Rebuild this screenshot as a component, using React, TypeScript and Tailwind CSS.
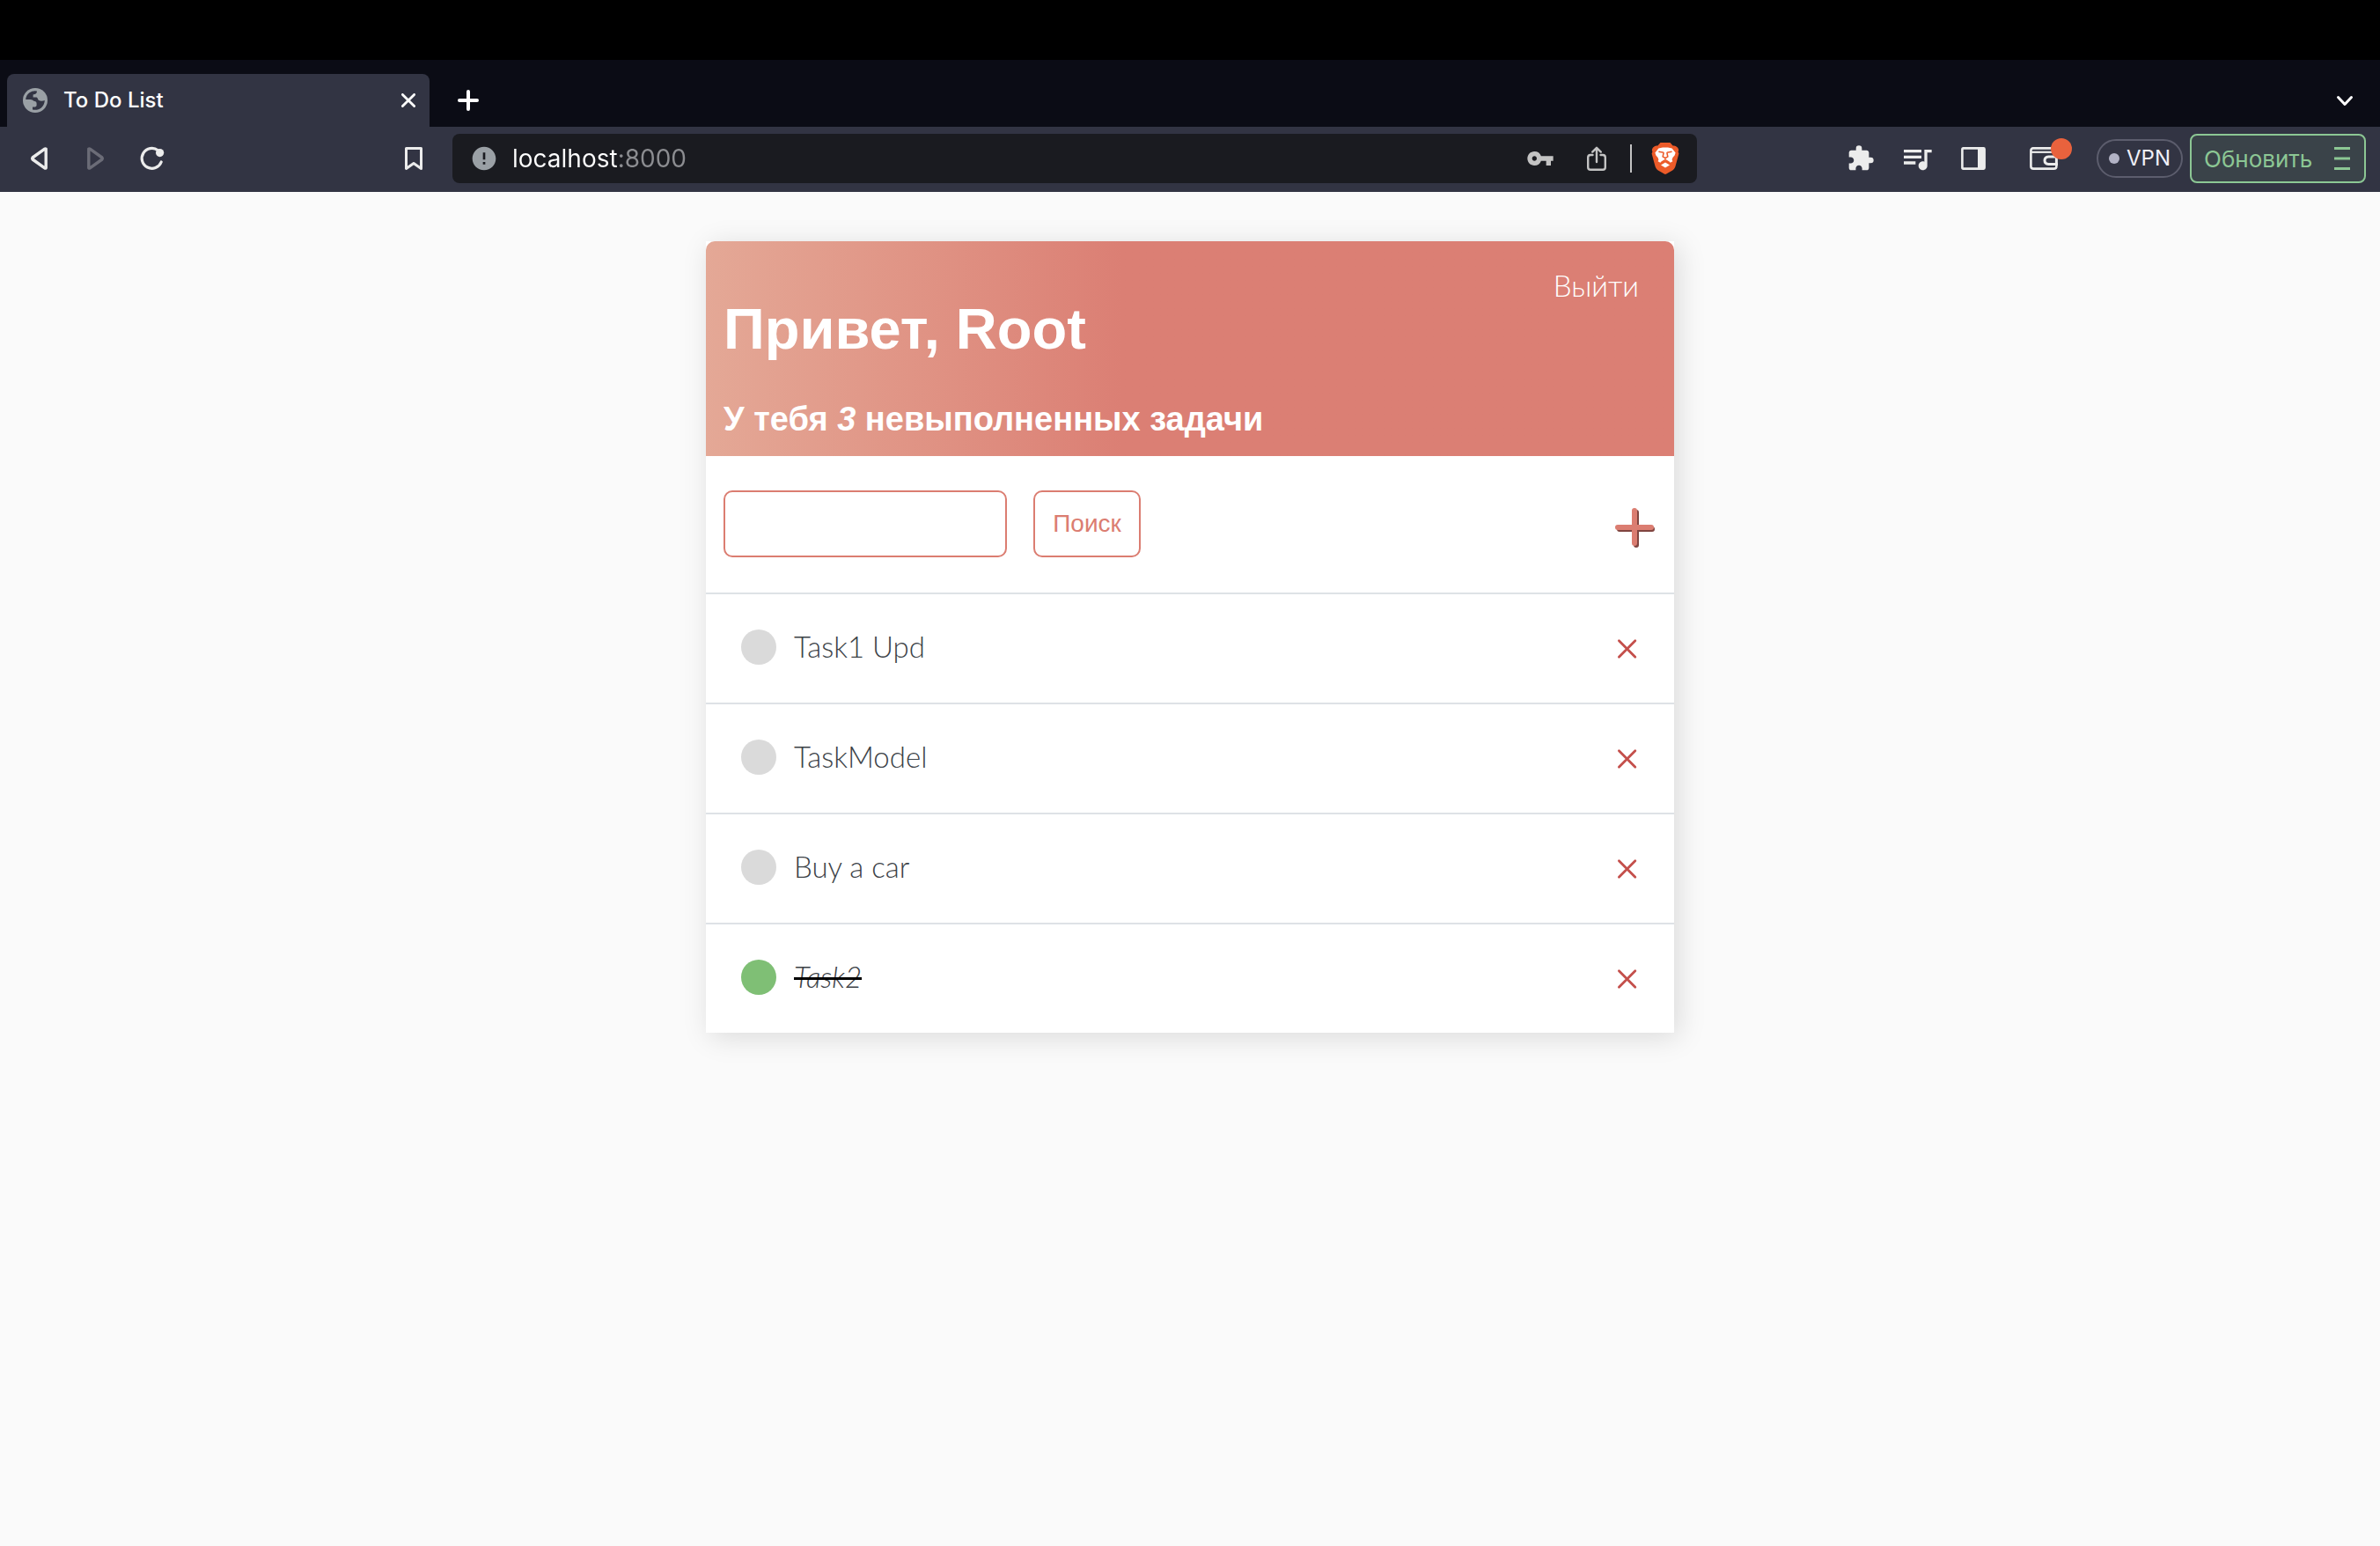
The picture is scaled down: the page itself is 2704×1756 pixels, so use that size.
import { useState } from "react";
import { MdError, MdExtension, MdQueueMusic, MdVpnKey } from "react-icons/md";

type Task = { id: number; title: string; complete: boolean };

const initialTasks: Task[] = [
  { id: 1, title: "Task1 Upd", complete: false },
  { id: 2, title: "TaskModel", complete: false },
  { id: 3, title: "Buy a car", complete: false },
  { id: 4, title: "Task2", complete: true },
];

function GlobeIcon() {
  return (
    <svg className="size-7 shrink-0" viewBox="0 0 28 28" aria-hidden="true">
      <circle cx="14" cy="14" r="14" fill="#9aa0a5" />
      <path
        d="M3.2 13A10.8 10.8 0 0 1 16 3.4L15.6 5.6Q15 7.3 11.6 7.6V10.4H15.4Q16.6 10.6 16.8 12Q17.2 14.2 19.5 14.6Q22.5 15 24.8 14A10.8 10.8 0 0 1 11 24.4V21.4H14Q15.6 21.2 15.6 19.5V17.5Q15.4 15 12.4 14.8Q11 13.2 8.5 13Z"
        fill="#323443"
      />
    </svg>
  );
}

function BraveIcon() {
  return (
    <svg className="h-9 w-8" viewBox="0 0 32 36" aria-hidden="true">
      <path
        d="M10.5 0H21.5L24.6 3.6C26.6 3 28.6 3.8 30.3 6L31.2 8.2L30.6 10.4L31.4 12.6L27.6 26.6C27 28.8 26 30.2 24.2 31.5L17.2 35.6Q16 36.3 14.8 35.6L7.8 31.5C6 30.2 5 28.8 4.4 26.6L.6 12.6L1.4 10.4L.8 8.2L1.7 6C3.4 3.8 5.4 3 7.4 3.6Z"
        fill="#ec5b29"
      />
      <path
        d="M8.4 6.6L13 5.6H19L23.6 6.6L27.6 11.6L26.6 14.4L24.4 17L23.6 19.4L24.4 21.2L21.2 23L19 21.6L16.8 20.2H15.2L13 21.6L10.8 23L7.6 21.2L8.4 19.4L7.6 17L5.4 14.4L4.4 11.6Z"
        fill="#fff"
      />
      <path d="M16 22.4L21 25.4L16 28.6L11 25.4Z" fill="#fff" />
      <path
        d="M8.4 10.2L14.2 11.2M23.6 10.2L17.8 11.2M14.2 11.2L13.2 15.8L16 17.6L18.8 15.8L17.8 11.2M16 17.6V19.6M10.8 22.8L16 19.4L21.2 22.8"
        fill="none"
        stroke="#ec5b29"
        strokeWidth="1.6"
      />
    </svg>
  );
}

function BrowserChrome() {
  return (
    <header className="font-[Inter,sans-serif]">
      <div className="h-[68px] bg-black" />
      <div className="flex h-[76px] items-end bg-[#0b0c15] pl-2">
        <div className="flex h-[60px] w-[480px] items-center rounded-t-lg bg-[#323443] pr-4 pl-[18px]">
          <GlobeIcon />
          <span className="ml-[18px] flex-1 text-2xl font-medium text-white">To Do List</span>
          <button type="button" aria-label="Close tab" className="size-4">
            <svg viewBox="0 0 16 16" fill="none" stroke="#fff" strokeWidth="2.8" strokeLinecap="round">
              <path d="M1.4 1.4L14.6 14.6M14.6 1.4L1.4 14.6" />
            </svg>
          </button>
        </div>
        <button type="button" aria-label="New tab" className="ml-8 flex h-[60px] items-center">
          <svg className="size-6" viewBox="0 0 24 24" fill="none" stroke="#fff" strokeWidth="4" strokeLinecap="round">
            <path d="M12 2V22M2 12H22" />
          </svg>
        </button>
        <button type="button" aria-label="Search tabs" className="mr-6 ml-auto flex h-[60px] items-center">
          <svg className="size-8" viewBox="0 0 32 32" fill="none" stroke="#fff" strokeWidth="3" strokeLinecap="round" strokeLinejoin="round">
            <path d="M8.5 12.5L16 20.5L23.5 12.5" />
          </svg>
        </button>
      </div>

      <div className="flex h-[74px] items-center bg-[#323443] pr-4 pb-0.5 pl-7">
        <button type="button" aria-label="Back" className="flex size-8 shrink-0 items-center justify-center">
          <svg className="size-8" viewBox="0 0 32 32" fill="none" stroke="#ececec" strokeWidth="3.4" strokeLinejoin="round">
            <path d="M24.2 5.2V26.8Q23.5 27.3 22.8 26.8L9 17Q8.2 16 9 15L22.8 5.2Q23.5 4.7 24.2 5.2Z" />
          </svg>
        </button>
        <button type="button" aria-label="Forward" className="ml-8 flex size-8 shrink-0 items-center justify-center">
          <svg className="size-8" viewBox="0 0 32 32" fill="none" stroke="#6b6c77" strokeWidth="3.4" strokeLinejoin="round">
            <path d="M8.8 5.2V26.8Q9.5 27.3 10.2 26.8L24 17Q24.8 16 24 15L10.2 5.2Q9.5 4.7 8.8 5.2Z" />
          </svg>
        </button>
        <button type="button" aria-label="Reload" className="ml-8 flex size-8 shrink-0 items-center justify-center">
          <svg className="size-8" viewBox="0 0 32 32" fill="none" stroke="#ececec" strokeWidth="3.2" strokeLinecap="round">
            <path d="M23.5 6.8A11.4 11.4 0 1 0 27.2 20" />
            <circle cx="25.6" cy="9.6" r="4.6" fill="#ececec" stroke="none" />
          </svg>
        </button>
        <button type="button" aria-label="Bookmark" className="ml-[266px] flex size-8 shrink-0 items-center justify-center">
          <svg className="size-8" viewBox="0 0 32 32" fill="none" stroke="#ececec" strokeWidth="3" strokeLinejoin="round">
            <path d="M7.5 4.5H24.5V27.5L16 21.5L7.5 27.5Z" />
          </svg>
        </button>

        <div className="mr-[170px] ml-7 flex h-14 min-w-0 flex-1 items-center rounded-lg bg-[#1a1b20] pr-5 pl-5">
          <MdError className="size-8 shrink-0 text-[#9aa0a5]" />
          <input
            type="text"
            aria-label="Address"
            defaultValue="localhost:8000"
            className="ml-4 min-w-0 flex-1 bg-linear-to-r from-white from-[121px] to-[#8c8d91] to-[121px] bg-clip-text text-[28px] text-transparent outline-none"
          />
          <button type="button" aria-label="Passwords">
            <MdVpnKey className="size-8 text-[#c3c3c3]" />
          </button>
          <button type="button" aria-label="Share" className="ml-8">
            <svg className="size-8" viewBox="0 0 32 32" fill="none" stroke="#c3c3c3" strokeWidth="2.4" strokeLinecap="round" strokeLinejoin="round">
              <path d="M11.5 12H9Q6.2 12 6.2 14.8V26Q6.2 28.8 9 28.8H23Q25.8 28.8 25.8 26V14.8Q25.8 12 23 12H20.5M16 20V4M11.2 8.6L16 3.8L20.8 8.6" />
            </svg>
          </button>
          <div className="mr-[22px] ml-[22px] h-8 w-0.5 bg-[#c3c3c3]" />
          <button type="button" aria-label="Brave Shields">
            <BraveIcon />
          </button>
        </div>

        <button type="button" aria-label="Extensions">
          <MdExtension className="size-8 text-[#ececec]" />
        </button>
        <button type="button" aria-label="Media" className="ml-7">
          <MdQueueMusic className="size-10 text-[#ececec]" />
        </button>
        <button type="button" aria-label="Side panel" className="ml-[30px]">
          <svg className="h-[26px] w-7" viewBox="0 0 28 26" aria-hidden="true">
            <rect x="1.4" y="1.4" width="25.2" height="23.2" rx="1" fill="none" stroke="#ececec" strokeWidth="2.6" />
            <path d="M19 1H27V25H19Z" fill="#ececec" />
          </svg>
        </button>
        <button type="button" aria-label="Wallet" className="relative ml-[50px]">
          <svg className="h-[26px] w-8" viewBox="0 0 32 26" fill="none" stroke="#ececec" strokeWidth="2.6">
            <path d="M30 9V4Q30 1.4 27 1.4H4Q1.4 1.4 1.4 4V22Q1.4 24.6 4.4 24.6H27.4Q30.4 24.6 30.4 22V20" />
            <path d="M1.4 5.8H30" strokeWidth="2.2" />
            <path d="M32 11H21.5Q17 11.4 17 15.2Q17 19 21.5 19.4H32M30.4 19V11" strokeWidth="3" />
          </svg>
          <span className="absolute -top-[10px] -right-4 size-6 rounded-full bg-[#e9623d]" />
        </button>
        <button
          type="button"
          className="ml-11 flex h-11 items-center gap-2 rounded-full border-2 border-[#5c5d6d] px-3 text-2xl text-[#f0f0f8]"
        >
          <span className="size-3 rounded-full bg-[#b2b3c5]" />
          VPN
        </button>
        <button
          type="button"
          className="ml-2 flex h-14 w-[200px] shrink-0 items-center justify-between rounded-lg border-2 border-[#8cc794] bg-[#3a4349] pr-4 pl-3.5 text-[26px] text-[#8cc794]"
        >
          Обновить
          <svg className="h-[26px] w-[18px]" viewBox="0 0 18 26" fill="none" stroke="#8cc794" strokeWidth="3">
            <path d="M0 1.5H18M0 13H18M0 24.5H18" />
          </svg>
        </button>
      </div>
    </header>
  );
}

function TaskRow({ task, onToggle, onDelete }: { task: Task; onToggle: () => void; onDelete: () => void }) {
  return (
    <li className="flex h-[125px] items-center border-t-2 border-[#dee2e6] px-10 pb-1">
      <input
        type="checkbox"
        aria-label={task.title}
        checked={task.complete}
        onChange={onToggle}
        className="size-10 appearance-none rounded-full bg-[#dadada] checked:bg-[#7fbf75]"
      />
      <a
        href="#task"
        className={
          task.complete
            ? "ml-5 font-[Lato,sans-serif] text-[33px] font-light text-[#3c4247] italic line-through decoration-black decoration-[3px]"
            : "ml-5 font-[Lato,sans-serif] text-[33px] font-light text-[#3c4247]"
        }
      >
        {task.title}
      </a>
      <button type="button" aria-label={"Удалить " + task.title} onClick={onDelete} className="mt-1 ml-auto">
        <svg className="size-7" viewBox="0 0 28 28" fill="none" stroke="#c44f4b" strokeWidth="2.8" strokeLinecap="round">
          <path d="M5.4 4.8L23.8 23.2M23.8 4.8L5.4 23.2" />
        </svg>
      </button>
    </li>
  );
}

export default function App() {
  const [tasks, setTasks] = useState(initialTasks);
  const pending = tasks.filter((t) => !t.complete).length;

  return (
    <div className="min-h-screen bg-[#fafafa]">
      <BrowserChrome />
      <main className="mx-auto mt-14 w-full max-w-[1100px] bg-white shadow-[5px_5px_30px_rgba(0,0,0,0.13)]">
        <div className="flex h-[244px] items-start justify-between rounded-t-[10px] bg-linear-to-r from-[#e4a896] to-[#db7f74] to-43% px-5">
          <div className="pt-16 font-['Liberation_Sans',Arial,sans-serif] font-bold text-white">
            <h1 className="text-[65px] leading-[72px]">Привет, Root</h1>
            <h2 className="mt-10 text-[38px] leading-[52px]">
              У тебя <i>{pending}</i> невыполненных задачи
            </h2>
          </div>
          <a href="#logout" className="mt-[30px] mr-5 font-[Lato,sans-serif] text-[33px] leading-10 font-light text-white">
            Выйти
          </a>
        </div>

        <div className="flex h-[155px] items-center px-5 pb-0.5">
          <form className="flex gap-[30px]" onSubmit={(e) => e.preventDefault()}>
            <input
              type="text"
              aria-label="Поиск задачи"
              className="h-[76px] w-[322px] rounded-[10px] border-2 border-[#db7d71] bg-white px-4 text-[28px] outline-none"
            />
            <button
              type="submit"
              className="h-[76px] w-[122px] rounded-[10px] border-2 border-[#db7d71] font-['Liberation_Sans',Arial,sans-serif] text-[28px] text-[#db7d71]"
            >
              Поиск
            </button>
          </form>
          <a href="#create" aria-label="Добавить задачу" className="mt-2 ml-auto">
            <svg className="size-12" viewBox="0 0 48 48" fill="none" strokeWidth="6" strokeLinecap="round">
              <path d="M25 7V44M6 26H43" stroke="#804540" />
              <path d="M23 5V42M4 24H42" stroke="#db7d71" />
            </svg>
          </a>
        </div>

        <ul>
          {tasks.map((task) => (
            <TaskRow
              key={task.id}
              task={task}
              onToggle={() => setTasks(tasks.map((t) => (t.id === task.id ? { ...t, complete: !t.complete } : t)))}
              onDelete={() => setTasks(tasks.filter((t) => t.id !== task.id))}
            />
          ))}
        </ul>
      </main>
    </div>
  );
}
